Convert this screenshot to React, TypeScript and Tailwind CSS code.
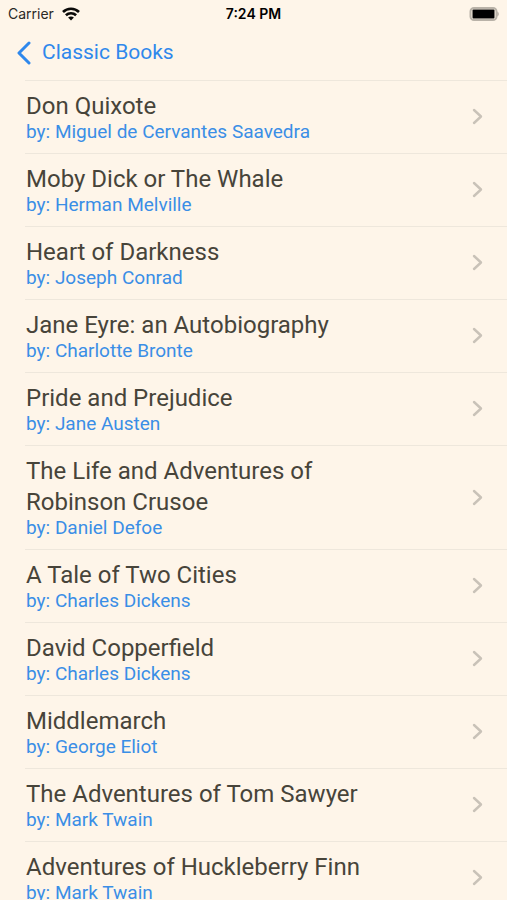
import React from "react";

type Book = { title: string; author: string };

const books: Book[] = [
  { title: "Don Quixote", author: "Miguel de Cervantes Saavedra" },
  { title: "Moby Dick or The Whale", author: "Herman Melville" },
  { title: "Heart of Darkness", author: "Joseph Conrad" },
  { title: "Jane Eyre: an Autobiography", author: "Charlotte Bronte" },
  { title: "Pride and Prejudice", author: "Jane Austen" },
  { title: "The Life and Adventures of Robinson Crusoe", author: "Daniel Defoe" },
  { title: "A Tale of Two Cities", author: "Charles Dickens" },
  { title: "David Copperfield", author: "Charles Dickens" },
  { title: "Middlemarch", author: "George Eliot" },
  { title: "The Adventures of Tom Sawyer", author: "Mark Twain" },
  { title: "Adventures of Huckleberry Finn", author: "Mark Twain" },
];

function StatusBar() {
  return (
    <header className="grid h-7 shrink-0 grid-cols-3 items-center px-2 font-['Inter','Liberation_Sans',sans-serif] text-black">
      <div className="flex items-center gap-2 text-sm text-[#2a2826]">
        <span>Carrier</span>
        <svg width="18" height="14" viewBox="0 0 18 14" fill="none" stroke="#0b0a09" strokeWidth="2.6" aria-label="Wi-Fi">
          <path d="M1 5C5.4 0.6 12.6 0.6 17 5" />
          <path d="M3.9 8.3C6.8 5.5 11.2 5.5 14.1 8.3" />
          <path d="M9 13.5L6.1 10.6C7.7 9.1 10.3 9.1 11.9 10.6Z" fill="#0b0a09" stroke="none" />
        </svg>
      </div>
      <time className="text-center text-sm font-semibold">7:24 PM</time>
      <svg className="justify-self-end" width="30" height="14" viewBox="0 0 30 14" aria-label="Battery full">
        <rect x="1.5" y="1" width="26" height="12" rx="3.5" fill="#fef5e9" stroke="#b9b2a8" strokeWidth="2" />
        <rect x="3.5" y="2.5" width="22" height="9" rx="1" fill="#000" />
        <path d="M28.2 4.5C30.4 5.2 30.4 8.8 28.2 9.5Z" fill="#b9b2a8" />
      </svg>
    </header>
  );
}

function BookRow({ title, author }: Book) {
  return (
    <li className="border-t border-[#eee7dc]">
      <a href="#book" className="flex items-center justify-between pt-2.5 pr-6 pb-[11px] pl-px">
        <span className="flex max-w-[350px] flex-col">
          <span className="text-2xl leading-[31px] text-[#47443a]">{title}</span>
          <span className="text-[19px] leading-5 text-[#3a8ee6]">by: {author}</span>
        </span>
        <svg width="11" height="17" viewBox="0 0 11 17" fill="none" stroke="#c9c2b8" strokeWidth="2.4" strokeLinecap="round" strokeLinejoin="round" aria-hidden="true">
          <path d="M2 2L9 8.5L2 15" />
        </svg>
      </a>
    </li>
  );
}

export default function App() {
  return (
    <div className="flex h-screen flex-col overflow-hidden bg-[#fef5e9] font-['Roboto','Liberation_Sans',sans-serif]">
      <StatusBar />
      <nav className="flex h-[52px] shrink-0 items-center px-4 pb-0.5">
        <a href="#back" className="flex items-center gap-2.5 text-[21px] text-[#2f88ec]">
          <svg width="16" height="24" viewBox="0 0 16 24" fill="none" stroke="currentColor" strokeWidth="3" strokeLinecap="round" strokeLinejoin="round" aria-hidden="true">
            <path d="M13 2L3 12L13 22" />
          </svg>
          Classic Books
        </a>
      </nav>
      <main className="min-h-0 flex-1 overflow-hidden pl-[25px]">
        <ul>
          {books.map((book) => (
            <BookRow key={book.title} {...book} />
          ))}
        </ul>
      </main>
    </div>
  );
}
